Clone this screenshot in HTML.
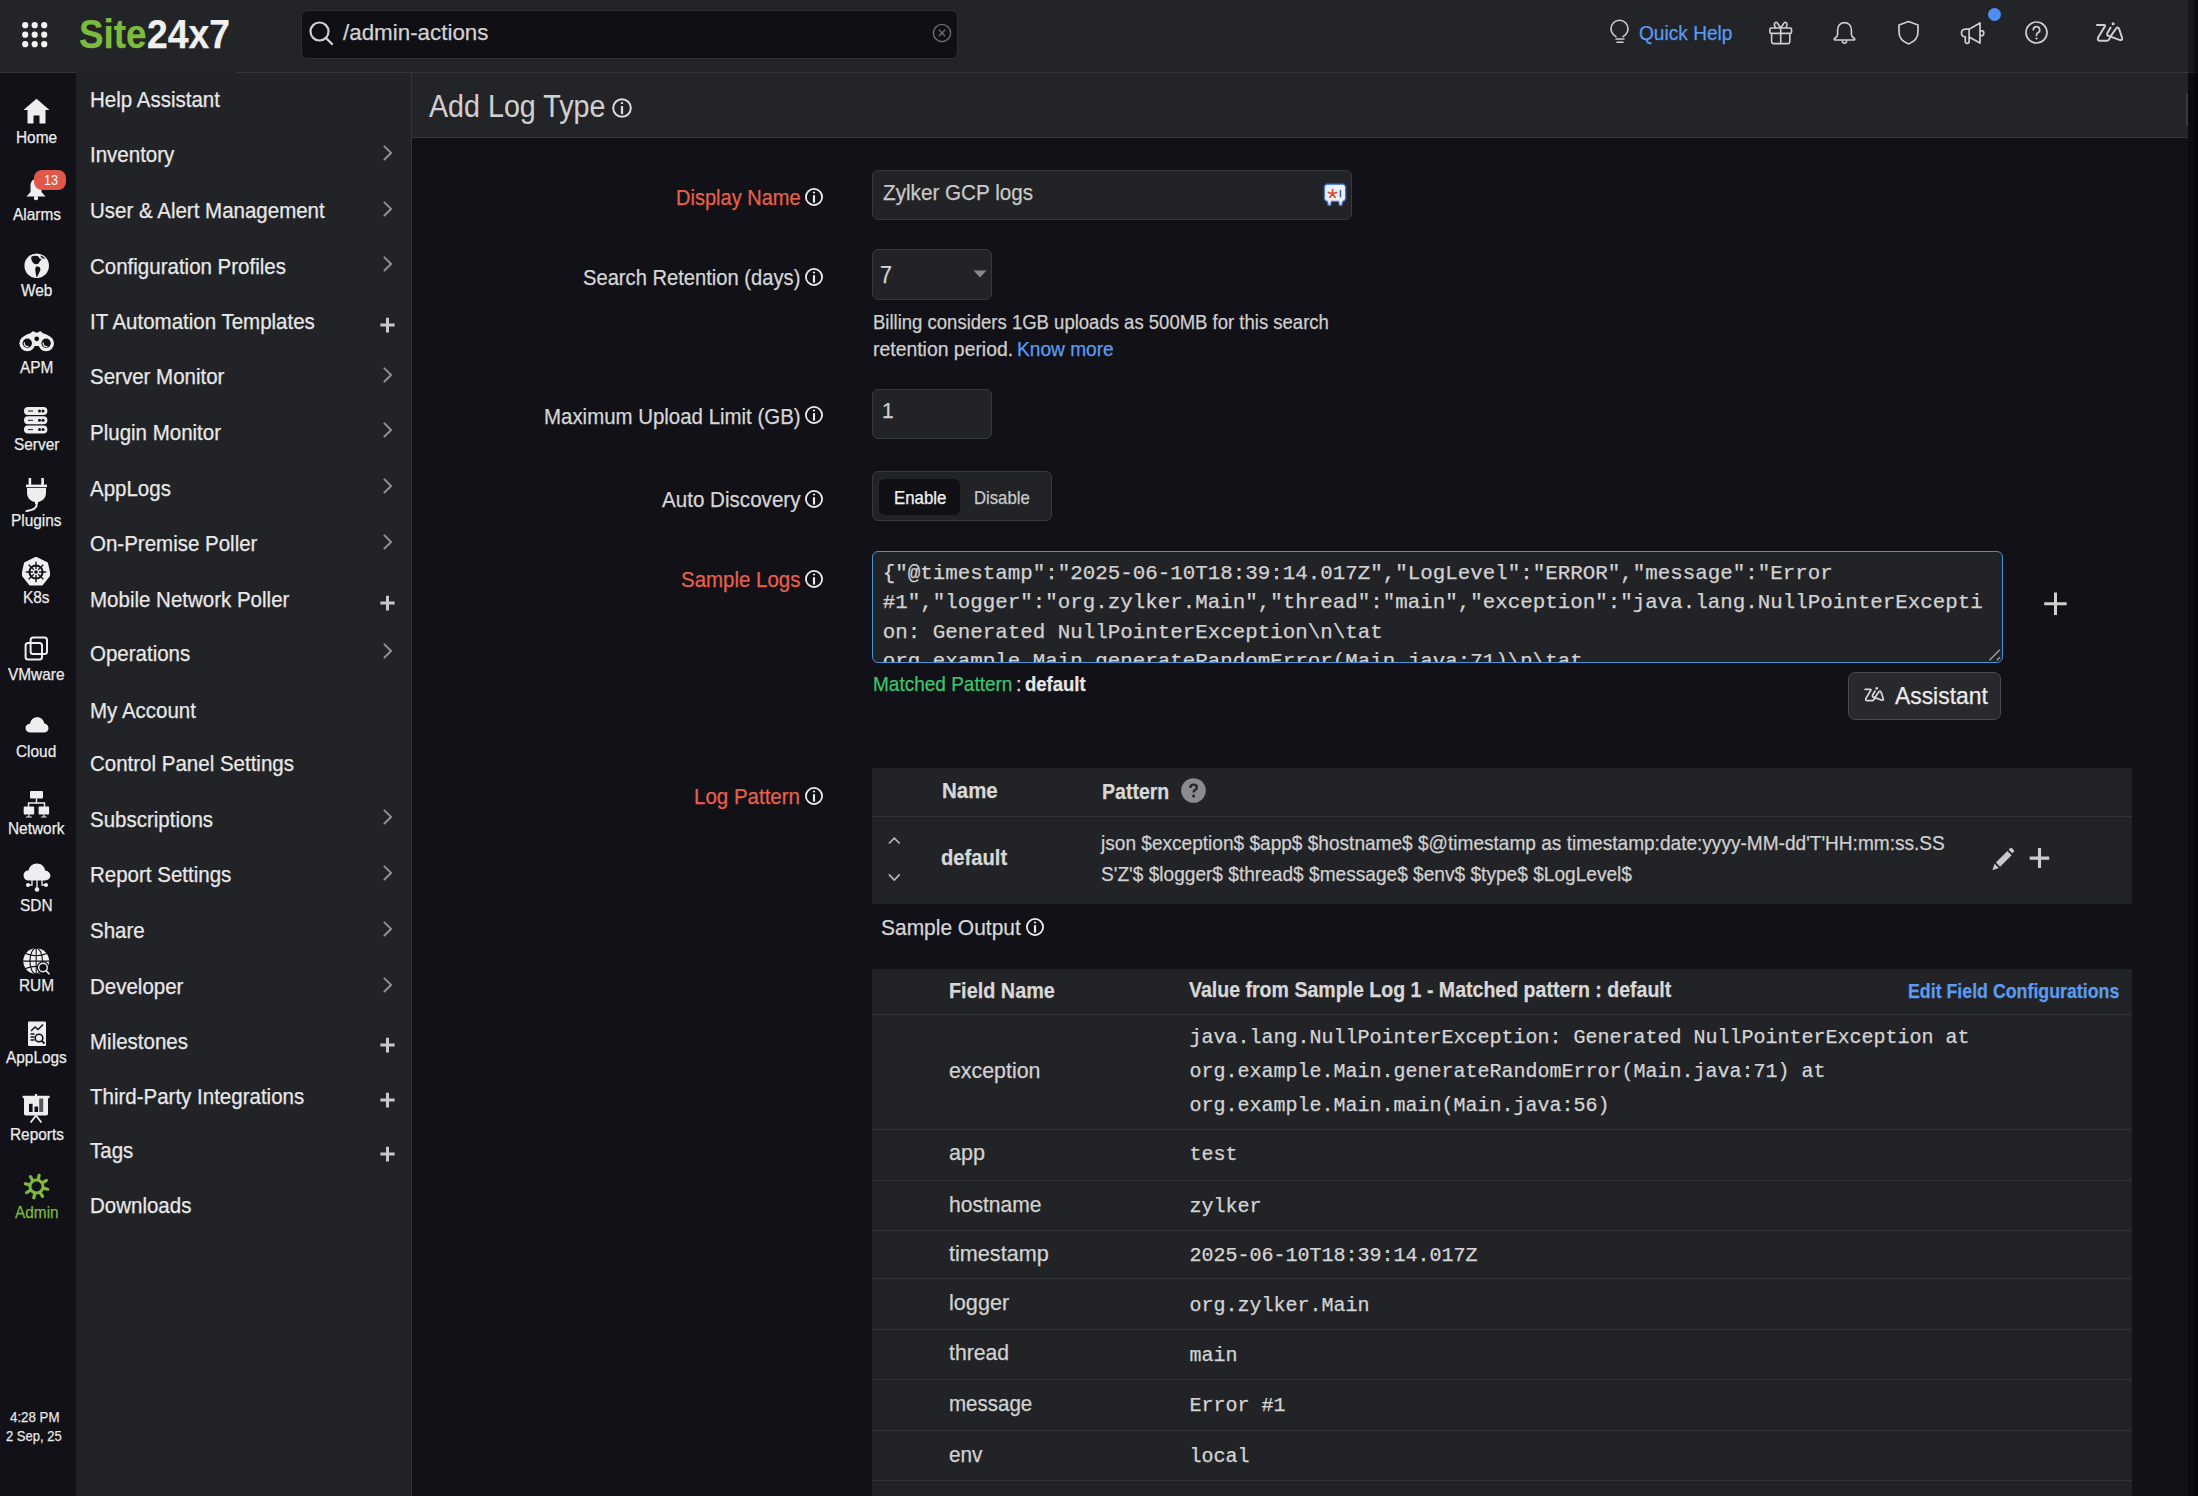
<!DOCTYPE html><html><head><meta charset="utf-8"><title>Add Log Type</title><style>*{margin:0;padding:0}
html,body{width:2198px;height:1496px;overflow:hidden;background:#111117;font-family:"Liberation Sans", sans-serif;}
.a{position:absolute;display:block}
.t{position:absolute;line-height:0;white-space:pre;transform-origin:0 0;-webkit-text-stroke:0.25px currentColor;}
</style></head><body><div class="a" style="left:0px;top:0px;width:2198px;height:72px;background:#222428;"></div>
<div class="a" style="left:0px;top:72px;width:2198px;height:1px;background:#34353a;"></div>
<div class="a" style="left:0px;top:73px;width:76px;height:1423px;background:#111117;"></div>
<div class="a" style="left:76px;top:73px;width:335px;height:1423px;background:#222327;"></div>
<div class="a" style="left:76px;top:72px;width:160px;height:1px;background:#222327;"></div>
<div class="a" style="left:411px;top:73px;width:1px;height:1423px;background:#34353a;"></div>
<div class="a" style="left:412px;top:73px;width:1786px;height:1423px;background:#111117;"></div>
<div class="a" style="left:412px;top:73px;width:1776px;height:64px;background:#222428;"></div>
<div class="a" style="left:412px;top:137px;width:1776px;height:1px;background:#34353a;"></div>
<svg class="a" style="left:21.6px;top:21.6px;" width="26" height="26" viewBox="0 0 26 26"><circle cx="3.2" cy="3.2" r="3.1" fill="#f2f2f2"/><circle cx="3.2" cy="12.7" r="3.1" fill="#f2f2f2"/><circle cx="3.2" cy="22.2" r="3.1" fill="#f2f2f2"/><circle cx="12.7" cy="3.2" r="3.1" fill="#f2f2f2"/><circle cx="12.7" cy="12.7" r="3.1" fill="#f2f2f2"/><circle cx="12.7" cy="22.2" r="3.1" fill="#f2f2f2"/><circle cx="22.2" cy="3.2" r="3.1" fill="#f2f2f2"/><circle cx="22.2" cy="12.7" r="3.1" fill="#f2f2f2"/><circle cx="22.2" cy="22.2" r="3.1" fill="#f2f2f2"/></svg>
<div class="t" style="left:79.00px;top:34.22px;font-size:41.2px;color:#7dbb3c;font-weight:bold;transform:scaleX(0.8933);">Site</div>
<div class="t" style="left:147.00px;top:34.22px;font-size:41.2px;color:#f0f0f0;font-weight:bold;transform:scaleX(0.9056);">24x7</div>
<div class="a" style="left:301px;top:9.5px;width:656.5px;height:49.5px;background:#0f0f14;border:1px solid #2d2f33;box-sizing:border-box;border-radius:7px;"></div>
<svg class="a" style="left:308px;top:20px;" width="28" height="28" viewBox="0 0 28 28"><circle cx="11.5" cy="11.5" r="9" fill="none" stroke="#d0d0d0" stroke-width="2.2"/><line x1="18" y1="18" x2="24" y2="24" stroke="#d0d0d0" stroke-width="2.4" stroke-linecap="round"/></svg>
<div class="t" style="left:343.00px;top:33.37px;font-size:22.0px;color:#d2d2d2;transform:scaleX(1.0170);">/admin-actions</div>
<svg class="a" style="left:932px;top:23px;" width="20" height="20" viewBox="0 0 20 20"><circle cx="10" cy="10" r="8.6" fill="none" stroke="#6c6d72" stroke-width="1.4"/><path d="M6.8 6.8 L13.2 13.2 M13.2 6.8 L6.8 13.2" stroke="#6c6d72" stroke-width="1.4"/></svg>
<svg class="a" style="left:1607px;top:19px;" width="26" height="27" viewBox="0 0 26 27"><path d="M9 17.6 Q4 14.6 4 9.8 A8.5 8.5 0 0 1 21 9.8 Q21 14.6 16 17.6" fill="none" stroke="#cfcfcf" stroke-width="1.6" stroke-linecap="round"/><path d="M9 20 H17 M10 23.2 H16" stroke="#cfcfcf" stroke-width="1.6" stroke-linecap="round"/></svg>
<div class="t" style="left:1639.00px;top:32.76px;font-size:20.87px;color:#5a9bf0;transform:scaleX(0.9161);">Quick Help</div>
<svg class="a" style="left:1767px;top:19px;" width="27" height="27" viewBox="0 0 27 27"><rect x="2.9" y="9" width="21.6" height="5.4" rx="1.2" fill="none" stroke="#cfcfcf" stroke-width="1.6"/><path d="M4.6 14.4 V22.6 Q4.6 24.6 6.6 24.6 H20.8 Q22.8 24.6 22.8 22.6 V14.4 M13.7 9 V24.6" fill="none" stroke="#cfcfcf" stroke-width="1.6"/><path d="M13.7 9 L10.5 4.3 Q9.3 2.6 8 3.8 Q7 5 7.6 6.5 L8.6 9 M13.7 9 L16.9 4.3 Q18.1 2.6 19.4 3.8 Q20.4 5 19.8 6.5 L18.8 9" fill="none" stroke="#cfcfcf" stroke-width="1.6" stroke-linejoin="round"/></svg>
<svg class="a" style="left:1831px;top:19px;" width="27" height="27" viewBox="0 0 27 27"><path d="M13.5 3.6 C8.6 3.6 6.6 7.6 6.6 11.6 V15.6 Q6.6 17.4 4.2 19 Q2.6 20.2 3.6 21 H23.4 Q24.4 20.2 22.8 19 Q20.4 17.4 20.4 15.6 V11.6 C20.4 7.6 18.4 3.6 13.5 3.6 Z" fill="none" stroke="#cfcfcf" stroke-width="1.6" stroke-linejoin="round"/><path d="M11.2 21.2 Q11.4 24.2 13.5 24.2 Q15.6 24.2 15.8 21.2" fill="none" stroke="#cfcfcf" stroke-width="1.6"/></svg>
<svg class="a" style="left:1895px;top:19px;" width="27" height="27" viewBox="0 0 27 27"><path d="M13.5 2.5 L23 6 V13 C23 19 18.5 23 13.5 25 C8.5 23 4 19 4 13 V6 Z" fill="none" stroke="#cfcfcf" stroke-width="1.7" stroke-linejoin="round"/></svg>
<svg class="a" style="left:1959px;top:19px;" width="27" height="27" viewBox="0 0 27 27"><path d="M10.1 10.2 L21 3.9 V24.1 L10.1 18.1 Z M10.1 10.2 H7 Q2.5 10.2 2.5 14 Q2.5 17.8 6.3 17.8 V22.6 Q6.3 24.3 8.2 24.3 Q10.1 24.3 10.1 22.6 V18.1 M21 11.9 H23.4 Q24.7 11.9 24.7 13.2 V15.3 Q24.7 16.6 23.4 16.6 H21" fill="none" stroke="#cfcfcf" stroke-width="1.7" stroke-linejoin="round"/></svg>
<div class="a" style="left:1988px;top:8px;width:12.5px;height:12.5px;background:#4f8ff0;border-radius:7px;"></div>
<svg class="a" style="left:2023px;top:19px;" width="27" height="27" viewBox="0 0 27 27"><circle cx="13.5" cy="13.5" r="10.5" fill="none" stroke="#cfcfcf" stroke-width="1.7"/><path d="M10.3 10.8a3.2 3.2 0 1 1 4.6 2.9c-.9.5-1.4 1.2-1.4 2.2v.6" fill="none" stroke="#cfcfcf" stroke-width="1.7" stroke-linecap="round"/><circle cx="13.5" cy="19.6" r="1.1" fill="#cfcfcf"/></svg>
<svg class="a" style="left:2094px;top:19px;" width="32" height="26" viewBox="0 0 32 26"><path d="M3 6 H10 Q11.6 6 10.8 7.4 L4.1 18.6 Q3 21.7 6 21.7 H13 Q14.6 21.7 15.6 19.6 L16.6 17.4 M16.6 8.5 L13.3 14.3 Q12.6 16.4 14.6 16.9 L25.4 20.9 Q28.8 21.8 28.1 18.7 L25.2 10.2 Q23.8 7 21.6 10.2 L16.5 17.4" fill="none" stroke="#cfcfcf" stroke-width="2" stroke-linejoin="round" stroke-linecap="round"/><circle cx="19.1" cy="4.7" r="1.5" fill="#cfcfcf"/></svg>
<div class="t" style="left:15.96px;top:137.83px;font-size:16.94px;color:#ececec;transform:scaleX(0.9091);">Home</div>
<div class="t" style="left:12.54px;top:215.33px;font-size:16.94px;color:#ececec;transform:scaleX(0.9091);">Alarms</div>
<div class="t" style="left:20.81px;top:291.33px;font-size:16.94px;color:#ececec;transform:scaleX(0.9091);">Web</div>
<div class="t" style="left:19.81px;top:368.43px;font-size:16.94px;color:#ececec;transform:scaleX(0.9091);">APM</div>
<div class="t" style="left:13.82px;top:444.73px;font-size:16.94px;color:#ececec;transform:scaleX(0.9091);">Server</div>
<div class="t" style="left:11.25px;top:521.33px;font-size:16.94px;color:#ececec;transform:scaleX(0.9091);">Plugins</div>
<div class="t" style="left:23.23px;top:597.53px;font-size:16.94px;color:#ececec;transform:scaleX(0.9091);">K8s</div>
<div class="t" style="left:8.26px;top:675.03px;font-size:16.94px;color:#ececec;transform:scaleX(0.9091);">VMware</div>
<div class="t" style="left:16.38px;top:752.03px;font-size:16.94px;color:#ececec;transform:scaleX(0.9091);">Cloud</div>
<div class="t" style="left:8.26px;top:828.83px;font-size:16.94px;color:#ececec;transform:scaleX(0.9091);">Network</div>
<div class="t" style="left:20.24px;top:905.53px;font-size:16.94px;color:#ececec;transform:scaleX(0.9091);">SDN</div>
<div class="t" style="left:18.96px;top:986.43px;font-size:16.94px;color:#ececec;transform:scaleX(0.9091);">RUM</div>
<div class="t" style="left:6.10px;top:1058.03px;font-size:16.94px;color:#ececec;transform:scaleX(0.9091);">AppLogs</div>
<div class="t" style="left:9.54px;top:1135.23px;font-size:16.94px;color:#ececec;transform:scaleX(0.9091);">Reports</div>
<div class="t" style="left:14.67px;top:1212.53px;font-size:16.94px;color:#7cb93c;transform:scaleX(0.9091);">Admin</div>
<svg class="a" style="left:23px;top:98px;" width="27" height="26" viewBox="0 0 27 26"><path d="M13.5 0.8 L26.5 12 H22.5 V25.5 H16.5 V17.5 H10.5 V25.5 H4.5 V12 H0.5 Z" fill="#eeeeee"/></svg>
<svg class="a" style="left:25px;top:176px;" width="22" height="25" viewBox="0 0 22 25"><path d="M11 3 C6.5 3 5.5 7 5.5 11 V16 L1.5 20.5 H20.5 L16.5 16 V11 C16.5 7 15.5 3 11 3Z" fill="#eeeeee"/><circle cx="11" cy="22" r="2.2" fill="#eeeeee"/></svg>
<div class="a" style="left:34.3px;top:170px;width:31.6px;height:20px;background:#e0584a;border-radius:8px;"></div>
<div class="t" style="left:43.50px;top:179.99px;font-size:14.45px;color:#ffffff;transform:scaleX(0.8710);-webkit-text-stroke:0;">13</div>
<svg class="a" style="left:23.5px;top:252.5px;" width="25" height="25" viewBox="0 0 25 25"><circle cx="12.7" cy="12.8" r="12.3" fill="#eeeeee"/><path d="M7.5 3.4 Q10 2.3 13.5 2.9 Q15.5 3.6 15 5 Q17 5.3 17.4 7 Q15.8 7.6 15.4 9.2 Q14.4 11 12.5 11.3 Q10.4 11.5 9.4 10 Q8.2 8.8 7.6 7.2 Q6.8 5 7.5 3.4 Z M16.2 2.6 Q19 3 21 5.4 Q19.5 6 18 5 Q16.6 4 16.2 2.6 Z M12 13.6 Q14.5 13 16 14.6 Q17 16.5 15.5 19 Q14.3 21 13.3 23.8 Q12.5 24.6 12.3 23.5 Q12 21 11.5 19 Q10.5 16.5 12 13.6 Z" fill="#111117"/></svg>
<svg class="a" style="left:18.5px;top:330px;" width="36" height="22" viewBox="0 0 36 22"><circle cx="8.3" cy="13.3" r="7.9" fill="#eeeeee"/><circle cx="27.1" cy="13.3" r="7.9" fill="#eeeeee"/><path d="M2.6 11 Q4.5 4.5 11.5 3.2 L13.4 1.6 Q14.4 0.9 15.4 1.7 L16.6 2.6 H18.8 L20 1.7 Q21 0.9 22 1.6 L23.9 3.2 Q30.9 4.5 32.8 11 L31 16 H4.4 Z" fill="#eeeeee"/><circle cx="8.3" cy="13.3" r="4.7" fill="#111117"/><circle cx="27.1" cy="13.3" r="4.7" fill="#111117"/><circle cx="17.7" cy="8.8" r="2.4" fill="#111117"/><path d="M5.4 12.4 A3.3 3.3 0 0 0 9.6 16.5 M24.2 12.4 A3.3 3.3 0 0 0 28.4 16.5" fill="none" stroke="#eeeeee" stroke-width="1.3"/></svg>
<svg class="a" style="left:24.4px;top:407px;" width="24" height="27" viewBox="0 0 24 27"><rect x="0" y="0.0" width="23.4" height="8" rx="4" fill="#eeeeee"/><path d="M4 4.0h5" stroke="#111117" stroke-width="1"/><circle cx="15.5" cy="4.0" r="1.5" fill="#111117"/><circle cx="19" cy="4.0" r="1.5" fill="#111117"/><rect x="0" y="9.3" width="23.4" height="8" rx="4" fill="#eeeeee"/><path d="M4 13.3h5" stroke="#111117" stroke-width="1"/><circle cx="15.5" cy="13.3" r="1.5" fill="#111117"/><circle cx="19" cy="13.3" r="1.5" fill="#111117"/><rect x="0" y="18.6" width="23.4" height="8" rx="4" fill="#eeeeee"/><path d="M4 22.6h5" stroke="#111117" stroke-width="1"/><circle cx="15.5" cy="22.6" r="1.5" fill="#111117"/><circle cx="19" cy="22.6" r="1.5" fill="#111117"/></svg>
<svg class="a" style="left:25px;top:477px;" width="23" height="36" viewBox="0 0 23 36"><rect x="3.6" y="1" width="2.6" height="8" fill="#eeeeee"/><rect x="16.3" y="1" width="2.6" height="8" fill="#eeeeee"/><rect x="1" y="7.6" width="21" height="2.6" fill="#eeeeee"/><path d="M2 11 H21 V16 C21 21 17 24.5 13 25 V27 H10 V25 C6 24.5 2 21 2 16Z" fill="#eeeeee"/><path d="M11.8 26 C12 31 9 33 1.5 34" stroke="#eeeeee" stroke-width="2" fill="none" stroke-linecap="round"/></svg>
<svg class="a" style="left:22.3px;top:556.5px;" width="28" height="29" viewBox="0 0 28 29"><polygon points="14.00,0.80 24.95,6.07 27.65,17.92 20.07,27.41 7.93,27.41 0.35,17.92 3.05,6.07" fill="#eeeeee" stroke="#eeeeee" stroke-width="2" stroke-linejoin="round"/><circle cx="14" cy="15" r="6.6" fill="none" stroke="#111117" stroke-width="2"/><line x1="14.00" y1="18.00" x2="14.00" y2="25.30" stroke="#111117" stroke-width="1.4"/><line x1="16.12" y1="17.12" x2="21.28" y2="22.28" stroke="#111117" stroke-width="1.4"/><line x1="17.00" y1="15.00" x2="24.30" y2="15.00" stroke="#111117" stroke-width="1.4"/><line x1="16.12" y1="12.88" x2="21.28" y2="7.72" stroke="#111117" stroke-width="1.4"/><line x1="14.00" y1="12.00" x2="14.00" y2="4.70" stroke="#111117" stroke-width="1.4"/><line x1="11.88" y1="12.88" x2="6.72" y2="7.72" stroke="#111117" stroke-width="1.4"/><line x1="11.00" y1="15.00" x2="3.70" y2="15.00" stroke="#111117" stroke-width="1.4"/><line x1="11.88" y1="17.12" x2="6.72" y2="22.28" stroke="#111117" stroke-width="1.4"/><circle cx="14" cy="15" r="1.8" fill="#111117"/></svg>
<svg class="a" style="left:24px;top:636px;" width="25" height="25" viewBox="0 0 25 25"><rect x="6.6" y="1.6" width="16.4" height="16.4" rx="2.5" fill="none" stroke="#eeeeee" stroke-width="2"/><rect x="1.6" y="7" width="16.4" height="16.4" rx="2.5" fill="none" stroke="#eeeeee" stroke-width="2"/></svg>
<svg class="a" style="left:24.5px;top:716px;" width="24" height="17" viewBox="0 0 24 17"><path d="M5.5 16.5 C2.5 16.5 0.5 14.5 0.5 12 C0.5 9.5 2.5 7.8 5 7.8 C5.5 4 8.5 1.3 12.3 1.3 C16 1.3 18.8 4 19.3 7.5 C21.8 7.8 23.5 9.8 23.5 12.2 C23.5 14.6 21.6 16.5 19 16.5Z" fill="#eeeeee"/></svg>
<svg class="a" style="left:23px;top:790px;" width="27" height="28" viewBox="0 0 27 28"><rect x="7" y="1" width="13" height="7.6" rx="1" fill="#eeeeee"/><path d="M13.5 8.6 V13 M5.5 17 V13 H21.5 V17" stroke="#eeeeee" stroke-width="1.4" fill="none"/><rect x="0.7" y="16.5" width="10.5" height="8" rx="1" fill="#eeeeee"/><rect x="15.6" y="16.5" width="10.5" height="8" rx="1" fill="#eeeeee"/><path d="M5.9 24.5 V27 M3 27 H8.8 M20.8 24.5 V27 M18 27 H23.6" stroke="#eeeeee" stroke-width="1.2"/></svg>
<svg class="a" style="left:22.5px;top:863px;" width="28" height="29" viewBox="0 0 28 29"><path d="M6 17.5 C2.8 17.5 0.6 15.3 0.6 12.4 C0.6 9.6 2.8 7.6 5.6 7.6 C6.2 3.6 9.6 0.6 13.9 0.6 C18.2 0.6 21.5 3.5 22.1 7.4 C25 7.7 27.4 9.8 27.4 12.6 C27.4 15.3 25.1 17.5 22 17.5Z" fill="#eeeeee"/><path d="M14 17 V25 M9 17 V22 H5.5 M19 17 V22 H22.5" stroke="#eeeeee" stroke-width="1.3" fill="none"/><circle cx="14" cy="26.5" r="2.3" fill="#eeeeee"/><circle cx="5" cy="22" r="2.1" fill="#eeeeee"/><circle cx="23" cy="22" r="2.1" fill="#eeeeee"/></svg>
<svg class="a" style="left:22px;top:946.5px;" width="30" height="30" viewBox="0 0 30 30"><circle cx="14.2" cy="14.1" r="12.9" fill="#eeeeee"/><g fill="none" stroke="#111117" stroke-width="1.1"><path d="M1.2 14.1 H27.2 M14.2 1.2 V27"/><ellipse cx="14.2" cy="14.1" rx="6.3" ry="12.9"/><path d="M3.6 6.6 Q14.2 11 24.8 6.6 M3.6 21.6 Q14.2 17.2 24.8 21.6"/></g><circle cx="21" cy="20.5" r="6.2" fill="#111117"/><circle cx="21" cy="20.5" r="4.3" fill="none" stroke="#eeeeee" stroke-width="1.4"/><path d="M24 23.6 L27 26.8" stroke="#eeeeee" stroke-width="1.6" stroke-linecap="round"/></svg>
<svg class="a" style="left:26.5px;top:1021px;" width="20" height="26" viewBox="0 0 20 26"><path d="M1 1.5 Q1 0.5 2 0.5 H18 Q19 0.5 19 1.5 V24 Q19 25 18 25 H2 Q1 25 1 24Z" fill="#eeeeee"/><path d="M4 10 L8 6 L11 8.5 L16 3.5" stroke="#111117" stroke-width="1.4" fill="none"/><path d="M3.5 13h4M3.5 16h4M3.5 19h4" stroke="#111117" stroke-width="1.3"/><circle cx="12" cy="17" r="3.8" fill="none" stroke="#111117" stroke-width="1.6"/><path d="M14.8 19.8 L17.5 22.5" stroke="#111117" stroke-width="1.8"/></svg>
<svg class="a" style="left:22px;top:1094px;" width="28" height="30" viewBox="0 0 28 30"><rect x="0.6" y="1.8" width="27" height="2.4" rx="0.8" fill="#eeeeee"/><rect x="2" y="2.5" width="24" height="19" rx="1.8" fill="#eeeeee"/><rect x="12.9" y="0" width="2.2" height="3" fill="#eeeeee"/><rect x="7" y="9.8" width="3.6" height="8.2" fill="#111117"/><rect x="12.5" y="12.5" width="3.6" height="5.5" fill="#111117"/><rect x="17.2" y="4.5" width="4" height="13.5" fill="#55565a"/><path d="M14 21.5 L8.6 28.5 M14 21.5 L19.4 28.5" stroke="#eeeeee" stroke-width="1.8"/></svg>
<svg class="a" style="left:22.8px;top:1172.5px;" width="27" height="27" viewBox="0 0 27 27"><line x1="15.37" y1="5.72" x2="16.21" y2="2.22" stroke="#7cb93c" stroke-width="3.2" stroke-linecap="round"/><line x1="20.32" y1="9.32" x2="23.39" y2="7.44" stroke="#7cb93c" stroke-width="3.2" stroke-linecap="round"/><line x1="21.28" y1="15.37" x2="24.78" y2="16.21" stroke="#7cb93c" stroke-width="3.2" stroke-linecap="round"/><line x1="17.68" y1="20.32" x2="19.56" y2="23.39" stroke="#7cb93c" stroke-width="3.2" stroke-linecap="round"/><line x1="11.63" y1="21.28" x2="10.79" y2="24.78" stroke="#7cb93c" stroke-width="3.2" stroke-linecap="round"/><line x1="6.68" y1="17.68" x2="3.61" y2="19.56" stroke="#7cb93c" stroke-width="3.2" stroke-linecap="round"/><line x1="5.72" y1="11.63" x2="2.22" y2="10.79" stroke="#7cb93c" stroke-width="3.2" stroke-linecap="round"/><line x1="9.32" y1="6.68" x2="7.44" y2="3.61" stroke="#7cb93c" stroke-width="3.2" stroke-linecap="round"/><circle cx="13.5" cy="13.5" r="6.5" fill="none" stroke="#7cb93c" stroke-width="3.0"/></svg>
<div class="t" style="left:9.60px;top:1416.62px;font-size:15.52px;color:#e6e6e6;transform:scaleX(0.8582);">4:28 PM</div>
<div class="t" style="left:6.30px;top:1436.32px;font-size:15.52px;color:#e6e6e6;transform:scaleX(0.8398);">2 Sep, 25</div>
<div class="t" style="left:89.50px;top:99.89px;font-size:21.94px;color:#e8e8e8;transform:scaleX(0.9344);">Help Assistant</div>
<div class="t" style="left:89.50px;top:154.89px;font-size:21.94px;color:#e8e8e8;transform:scaleX(0.9344);">Inventory</div>
<svg class="a" style="left:380px;top:142.5px;" width="16" height="20" viewBox="0 0 16 20"><path d="M4.4 3.4 L11.1 10 L4.4 16.5" fill="none" stroke="#8e8f93" stroke-width="2" stroke-linecap="round" stroke-linejoin="round"/></svg>
<div class="t" style="left:89.50px;top:210.99px;font-size:21.94px;color:#e8e8e8;transform:scaleX(0.9344);">User &amp; Alert Management</div>
<svg class="a" style="left:380px;top:198.6px;" width="16" height="20" viewBox="0 0 16 20"><path d="M4.4 3.4 L11.1 10 L4.4 16.5" fill="none" stroke="#8e8f93" stroke-width="2" stroke-linecap="round" stroke-linejoin="round"/></svg>
<div class="t" style="left:89.50px;top:266.69px;font-size:21.94px;color:#e8e8e8;transform:scaleX(0.9344);">Configuration Profiles</div>
<svg class="a" style="left:380px;top:254.3px;" width="16" height="20" viewBox="0 0 16 20"><path d="M4.4 3.4 L11.1 10 L4.4 16.5" fill="none" stroke="#8e8f93" stroke-width="2" stroke-linecap="round" stroke-linejoin="round"/></svg>
<div class="t" style="left:89.50px;top:321.99px;font-size:21.94px;color:#e8e8e8;transform:scaleX(0.9344);">IT Automation Templates</div>
<svg class="a" style="left:378px;top:315.20000000000005px;" width="20" height="20" viewBox="0 0 20 20"><path d="M2.4 10 H16.6 M9.5 2.8 V17.5" fill="none" stroke="#c9c9c9" stroke-width="3"/></svg>
<div class="t" style="left:89.50px;top:376.99px;font-size:21.94px;color:#e8e8e8;transform:scaleX(0.9344);">Server Monitor</div>
<svg class="a" style="left:380px;top:364.6px;" width="16" height="20" viewBox="0 0 16 20"><path d="M4.4 3.4 L11.1 10 L4.4 16.5" fill="none" stroke="#8e8f93" stroke-width="2" stroke-linecap="round" stroke-linejoin="round"/></svg>
<div class="t" style="left:89.50px;top:432.69px;font-size:21.94px;color:#e8e8e8;transform:scaleX(0.9344);">Plugin Monitor</div>
<svg class="a" style="left:380px;top:420.3px;" width="16" height="20" viewBox="0 0 16 20"><path d="M4.4 3.4 L11.1 10 L4.4 16.5" fill="none" stroke="#8e8f93" stroke-width="2" stroke-linecap="round" stroke-linejoin="round"/></svg>
<div class="t" style="left:89.50px;top:488.69px;font-size:21.94px;color:#e8e8e8;transform:scaleX(0.9344);">AppLogs</div>
<svg class="a" style="left:380px;top:476.3px;" width="16" height="20" viewBox="0 0 16 20"><path d="M4.4 3.4 L11.1 10 L4.4 16.5" fill="none" stroke="#8e8f93" stroke-width="2" stroke-linecap="round" stroke-linejoin="round"/></svg>
<div class="t" style="left:89.50px;top:544.39px;font-size:21.94px;color:#e8e8e8;transform:scaleX(0.9344);">On-Premise Poller</div>
<svg class="a" style="left:380px;top:532px;" width="16" height="20" viewBox="0 0 16 20"><path d="M4.4 3.4 L11.1 10 L4.4 16.5" fill="none" stroke="#8e8f93" stroke-width="2" stroke-linecap="round" stroke-linejoin="round"/></svg>
<div class="t" style="left:89.50px;top:600.09px;font-size:21.94px;color:#e8e8e8;transform:scaleX(0.9344);">Mobile Network Poller</div>
<svg class="a" style="left:378px;top:593.3000000000001px;" width="20" height="20" viewBox="0 0 20 20"><path d="M2.4 10 H16.6 M9.5 2.8 V17.5" fill="none" stroke="#c9c9c9" stroke-width="3"/></svg>
<div class="t" style="left:89.50px;top:653.79px;font-size:21.94px;color:#e8e8e8;transform:scaleX(0.9344);">Operations</div>
<svg class="a" style="left:380px;top:641.4px;" width="16" height="20" viewBox="0 0 16 20"><path d="M4.4 3.4 L11.1 10 L4.4 16.5" fill="none" stroke="#8e8f93" stroke-width="2" stroke-linecap="round" stroke-linejoin="round"/></svg>
<div class="t" style="left:89.50px;top:710.59px;font-size:21.94px;color:#e8e8e8;transform:scaleX(0.9344);">My Account</div>
<div class="t" style="left:89.50px;top:764.39px;font-size:21.94px;color:#e8e8e8;transform:scaleX(0.9344);">Control Panel Settings</div>
<div class="t" style="left:89.50px;top:819.59px;font-size:21.94px;color:#e8e8e8;transform:scaleX(0.9344);">Subscriptions</div>
<svg class="a" style="left:380px;top:807.2px;" width="16" height="20" viewBox="0 0 16 20"><path d="M4.4 3.4 L11.1 10 L4.4 16.5" fill="none" stroke="#8e8f93" stroke-width="2" stroke-linecap="round" stroke-linejoin="round"/></svg>
<div class="t" style="left:89.50px;top:875.39px;font-size:21.94px;color:#e8e8e8;transform:scaleX(0.9344);">Report Settings</div>
<svg class="a" style="left:380px;top:863px;" width="16" height="20" viewBox="0 0 16 20"><path d="M4.4 3.4 L11.1 10 L4.4 16.5" fill="none" stroke="#8e8f93" stroke-width="2" stroke-linecap="round" stroke-linejoin="round"/></svg>
<div class="t" style="left:89.50px;top:931.39px;font-size:21.94px;color:#e8e8e8;transform:scaleX(0.9344);">Share</div>
<svg class="a" style="left:380px;top:919px;" width="16" height="20" viewBox="0 0 16 20"><path d="M4.4 3.4 L11.1 10 L4.4 16.5" fill="none" stroke="#8e8f93" stroke-width="2" stroke-linecap="round" stroke-linejoin="round"/></svg>
<div class="t" style="left:89.50px;top:987.39px;font-size:21.94px;color:#e8e8e8;transform:scaleX(0.9344);">Developer</div>
<svg class="a" style="left:380px;top:975px;" width="16" height="20" viewBox="0 0 16 20"><path d="M4.4 3.4 L11.1 10 L4.4 16.5" fill="none" stroke="#8e8f93" stroke-width="2" stroke-linecap="round" stroke-linejoin="round"/></svg>
<div class="t" style="left:89.50px;top:1041.99px;font-size:21.94px;color:#e8e8e8;transform:scaleX(0.9344);">Milestones</div>
<svg class="a" style="left:378px;top:1035.1999999999998px;" width="20" height="20" viewBox="0 0 20 20"><path d="M2.4 10 H16.6 M9.5 2.8 V17.5" fill="none" stroke="#c9c9c9" stroke-width="3"/></svg>
<div class="t" style="left:89.50px;top:1097.09px;font-size:21.94px;color:#e8e8e8;transform:scaleX(0.9344);">Third-Party Integrations</div>
<svg class="a" style="left:378px;top:1090.3px;" width="20" height="20" viewBox="0 0 20 20"><path d="M2.4 10 H16.6 M9.5 2.8 V17.5" fill="none" stroke="#c9c9c9" stroke-width="3"/></svg>
<div class="t" style="left:89.50px;top:1150.99px;font-size:21.94px;color:#e8e8e8;transform:scaleX(0.9344);">Tags</div>
<svg class="a" style="left:378px;top:1144.1999999999998px;" width="20" height="20" viewBox="0 0 20 20"><path d="M2.4 10 H16.6 M9.5 2.8 V17.5" fill="none" stroke="#c9c9c9" stroke-width="3"/></svg>
<div class="t" style="left:89.50px;top:1206.09px;font-size:21.94px;color:#e8e8e8;transform:scaleX(0.9344);">Downloads</div>
<div class="t" style="left:428.90px;top:107.49px;font-size:30.9px;color:#d0d0d0;transform:scaleX(0.9277);-webkit-text-stroke:0.1px currentColor;">Add Log Type</div>
<svg class="a" style="left:611.8px;top:97.9px;" width="20" height="20" viewBox="0 0 20 20"><g transform="translate(10 10) scale(1.088)"><circle cx="0" cy="0" r="8.1" fill="none" stroke="#dddddd" stroke-width="1.8"/><rect x="-1.05" y="-5.3" width="2.1" height="1.6" fill="#dddddd"/><rect x="-1.05" y="-1.8" width="2.1" height="7.4" fill="#dddddd"/></g></svg>
<div class="t" style="left:675.50px;top:198.37px;font-size:21.72px;color:#e8604c;transform:scaleX(0.9217);">Display Name</div>
<svg class="a" style="left:804.1px;top:187px;" width="20" height="20" viewBox="0 0 20 20"><g transform="translate(10 10) scale(1.000)"><circle cx="0" cy="0" r="8.1" fill="none" stroke="#eeeeee" stroke-width="1.8"/><rect x="-1.05" y="-5.3" width="2.1" height="1.6" fill="#eeeeee"/><rect x="-1.05" y="-1.8" width="2.1" height="7.4" fill="#eeeeee"/></g></svg>
<div class="t" style="left:582.70px;top:278.47px;font-size:21.72px;color:#d6d6d6;transform:scaleX(0.9282);">Search Retention (days)</div>
<svg class="a" style="left:804.1px;top:267.2px;" width="20" height="20" viewBox="0 0 20 20"><g transform="translate(10 10) scale(1.000)"><circle cx="0" cy="0" r="8.1" fill="none" stroke="#eeeeee" stroke-width="1.8"/><rect x="-1.05" y="-5.3" width="2.1" height="1.6" fill="#eeeeee"/><rect x="-1.05" y="-1.8" width="2.1" height="7.4" fill="#eeeeee"/></g></svg>
<div class="t" style="left:543.50px;top:416.67px;font-size:21.72px;color:#d6d6d6;transform:scaleX(0.9407);">Maximum Upload Limit (GB)</div>
<svg class="a" style="left:804.1px;top:405.4px;" width="20" height="20" viewBox="0 0 20 20"><g transform="translate(10 10) scale(1.000)"><circle cx="0" cy="0" r="8.1" fill="none" stroke="#eeeeee" stroke-width="1.8"/><rect x="-1.05" y="-5.3" width="2.1" height="1.6" fill="#eeeeee"/><rect x="-1.05" y="-1.8" width="2.1" height="7.4" fill="#eeeeee"/></g></svg>
<div class="t" style="left:661.60px;top:500.47px;font-size:21.72px;color:#d6d6d6;transform:scaleX(0.9482);">Auto Discovery</div>
<svg class="a" style="left:804.1px;top:489.2px;" width="20" height="20" viewBox="0 0 20 20"><g transform="translate(10 10) scale(1.000)"><circle cx="0" cy="0" r="8.1" fill="none" stroke="#eeeeee" stroke-width="1.8"/><rect x="-1.05" y="-5.3" width="2.1" height="1.6" fill="#eeeeee"/><rect x="-1.05" y="-1.8" width="2.1" height="7.4" fill="#eeeeee"/></g></svg>
<div class="t" style="left:680.70px;top:580.27px;font-size:21.72px;color:#e8604c;transform:scaleX(0.9418);">Sample Logs</div>
<svg class="a" style="left:804.1px;top:569px;" width="20" height="20" viewBox="0 0 20 20"><g transform="translate(10 10) scale(1.000)"><circle cx="0" cy="0" r="8.1" fill="none" stroke="#eeeeee" stroke-width="1.8"/><rect x="-1.05" y="-5.3" width="2.1" height="1.6" fill="#eeeeee"/><rect x="-1.05" y="-1.8" width="2.1" height="7.4" fill="#eeeeee"/></g></svg>
<div class="t" style="left:694.10px;top:797.27px;font-size:21.72px;color:#e8604c;transform:scaleX(0.9439);">Log Pattern</div>
<svg class="a" style="left:804.1px;top:786px;" width="20" height="20" viewBox="0 0 20 20"><g transform="translate(10 10) scale(1.000)"><circle cx="0" cy="0" r="8.1" fill="none" stroke="#eeeeee" stroke-width="1.8"/><rect x="-1.05" y="-5.3" width="2.1" height="1.6" fill="#eeeeee"/><rect x="-1.05" y="-1.8" width="2.1" height="7.4" fill="#eeeeee"/></g></svg>
<div class="a" style="left:872px;top:169.5px;width:479.8px;height:50px;background:#222327;border:1px solid #38393d;box-sizing:border-box;border-radius:6px;"></div>
<div class="t" style="left:882.90px;top:193.22px;font-size:22.15px;color:#c9c9c9;transform:scaleX(0.9339);">Zylker GCP logs</div>
<svg class="a" style="left:1323px;top:182.8px;" width="24" height="24" viewBox="0 0 24 24"><path d="M3.4 1.2 H20.6 L22.6 3.2 V16.3 L20.6 18.3 H19.6 L18.8 22.3 H16.4 L15.6 18.3 H8.4 L7.6 22.3 H5.2 L4.4 18.3 H3.4 L1.4 16.3 V3.2 Z" fill="#f0f0f0" stroke="#3a7ae0" stroke-width="1.3" stroke-linejoin="round"/><path d="M9.5 10.8 L9.50 6.50 M9.5 10.8 L13.59 9.47 M9.5 10.8 L12.03 14.28 M9.5 10.8 L6.97 14.28 M9.5 10.8 L5.41 9.47 " stroke="#e0483a" stroke-width="1.7" stroke-linecap="round"/><rect x="16.7" y="6.8" width="1.5" height="7.6" rx="0.7" fill="#2c5fc0"/></svg>
<div class="a" style="left:872px;top:249.4px;width:119.6px;height:50.8px;background:#222327;border:1px solid #38393d;box-sizing:border-box;border-radius:6px;"></div>
<div class="t" style="left:879.50px;top:275.02px;font-size:23.01px;color:#d6d6d6;transform:scaleX(0.9344);">7</div>
<svg class="a" style="left:972px;top:269px;" width="16" height="10" viewBox="0 0 16 10"><path d="M1.5 1.5 H14.5 L8 8.5 Z" fill="#8a8a8e"/></svg>
<div class="t" style="left:872.50px;top:321.92px;font-size:20.12px;color:#cfcfcf;transform:scaleX(0.9206);">Billing considers 1GB uploads as 500MB for this search</div>
<div class="t" style="left:872.50px;top:348.92px;font-size:20.12px;color:#cfcfcf;transform:scaleX(0.9642);">retention period.</div>
<div class="t" style="left:1017.40px;top:348.92px;font-size:20.12px;color:#5c9cf0;transform:scaleX(0.9513);">Know more</div>
<div class="a" style="left:872px;top:388.5px;width:119.6px;height:50px;background:#222327;border:1px solid #38393d;box-sizing:border-box;border-radius:6px;"></div>
<div class="t" style="left:881.50px;top:411.41px;font-size:22.47px;color:#d0d0d0;transform:scaleX(0.9346);">1</div>
<div class="a" style="left:872px;top:471px;width:179.7px;height:50.4px;background:#222327;border:1px solid #38393d;box-sizing:border-box;border-radius:6px;"></div>
<div class="a" style="left:879.2px;top:478.6px;width:80.5px;height:36.1px;background:#111115;border-radius:6px;"></div>
<div class="t" style="left:893.50px;top:498.09px;font-size:18.19px;color:#f0f0f0;transform:scaleX(0.9269);">Enable</div>
<div class="t" style="left:974.20px;top:498.09px;font-size:18.19px;color:#c9c9c9;transform:scaleX(0.9182);">Disable</div>
<div class="a" style="left:872px;top:551px;width:1131px;height:112px;box-sizing:border-box;border:1.5px solid #4593dc;border-radius:6px;background:#222327;overflow:hidden"><div style="position:absolute;left:9.8px;top:6.5px;font-family:'Liberation Mono', monospace;font-size:20.84px;line-height:29.6px;color:#d2d2d2;white-space:pre;-webkit-text-stroke:0.25px currentColor;">{&quot;@timestamp&quot;:&quot;2025-06-10T18:39:14.017Z&quot;,&quot;LogLevel&quot;:&quot;ERROR&quot;,&quot;message&quot;:&quot;Error
#1&quot;,&quot;logger&quot;:&quot;org.zylker.Main&quot;,&quot;thread&quot;:&quot;main&quot;,&quot;exception&quot;:&quot;java.lang.NullPointerExcepti
on: Generated NullPointerException\n\tat
org.example.Main.generateRandomError(Main.java:71)\n\tat</div></div>
<svg class="a" style="left:1986px;top:647px;" width="16" height="16" viewBox="0 0 16 16"><path d="M3.5 13.2 L13.8 2.8 M11 13.2 L13.8 10.3" stroke="#9a9a9a" stroke-width="1.5"/></svg>
<svg class="a" style="left:2043px;top:591px;" width="25" height="25" viewBox="0 0 25 25"><path d="M1.2 12.8 H23.7 M12.5 1.4 V24" stroke="#cfcfcf" stroke-width="3"/></svg>
<div class="t" style="left:872.50px;top:684.16px;font-size:20.87px;color:#3ec46d;transform:scaleX(0.9110);">Matched Pattern</div>
<div class="t" style="left:1015.50px;top:684.16px;font-size:20.87px;color:#e0e0e0;transform:scaleX(0.9344);">:</div>
<div class="t" style="left:1025.00px;top:684.16px;font-size:20.87px;color:#e6e6e6;font-weight:bold;transform:scaleX(0.8873);">default</div>
<div class="a" style="left:1848.2px;top:672.2px;width:152.8px;height:47.5px;background:#28292d;border:1px solid #4a4b50;box-sizing:border-box;border-radius:7px;"></div>
<svg class="a" style="left:1863px;top:685px;" width="24" height="20" viewBox="0 0 24 20"><g transform="scale(0.72)"><path d="M3 6 H10 Q11.6 6 10.8 7.4 L4.1 18.6 Q3 21.7 6 21.7 H13 Q14.6 21.7 15.6 19.6 L16.6 17.4 M16.6 8.5 L13.3 14.3 Q12.6 16.4 14.6 16.9 L25.4 20.9 Q28.8 21.8 28.1 18.7 L25.2 10.2 Q23.8 7 21.6 10.2 L16.5 17.4" fill="none" stroke="#d8d8d8" stroke-width="2.4" stroke-linejoin="round" stroke-linecap="round"/><circle cx="19.1" cy="4.7" r="1.9" fill="#d8d8d8"/></g></svg>
<div class="t" style="left:1894.60px;top:695.69px;font-size:23.69px;color:#ececec;transform:scaleX(0.9655);">Assistant</div>
<div class="a" style="left:872px;top:767.5px;width:1260px;height:136.3px;background:#222327;"></div>
<div class="a" style="left:872px;top:816px;width:1260px;height:1px;background:#313237;"></div>
<div class="t" style="left:941.50px;top:790.99px;font-size:21.94px;color:#d8d8d8;font-weight:bold;transform:scaleX(0.9321);">Name</div>
<div class="t" style="left:1101.60px;top:791.79px;font-size:21.94px;color:#d8d8d8;font-weight:bold;transform:scaleX(0.8903);">Pattern</div>
<svg class="a" style="left:1181px;top:777.5px;" width="25" height="25" viewBox="0 0 25 25"><circle cx="12.5" cy="12.5" r="12.3" fill="#8b8b8d"/><path d="M9.3 10 Q9.3 6.6 12.6 6.6 Q15.8 6.6 15.8 9.6 Q15.8 11.4 13.6 12.4 Q12.6 13 12.6 14.6" fill="none" stroke="#26272b" stroke-width="2.4"/><circle cx="12.6" cy="18" r="1.5" fill="#26272b"/></svg>
<svg class="a" style="left:886px;top:834px;" width="16" height="50" viewBox="0 0 16 50"><path d="M2.9 9.5 L8.3 4.1 L13.7 9.5 M2.9 40.4 L8.3 46.1 L13.7 40.4" fill="none" stroke="#bdbdbd" stroke-width="1.6"/></svg>
<div class="t" style="left:941.20px;top:858.29px;font-size:21.94px;color:#d8d8d8;font-weight:bold;transform:scaleX(0.9191);">default</div>
<div class="t" style="left:1101.20px;top:843.16px;font-size:20.87px;color:#d0d0d0;transform:scaleX(0.9142);">json $exception$ $app$ $hostname$ $@timestamp as timestamp:date:yyyy-MM-dd&#x27;T&#x27;HH:mm:ss.SS</div>
<div class="t" style="left:1101.20px;top:874.16px;font-size:20.87px;color:#d0d0d0;transform:scaleX(0.9159);">S&#x27;Z&#x27;$ $logger$ $thread$ $message$ $env$ $type$ $LogLevel$</div>
<svg class="a" style="left:1988px;top:846px;" width="28" height="28" viewBox="0 0 28 28"><g fill="#cacaca"><path d="M4.4 24.3 L6.6 17.8 L10.9 22.1 Z"/><path d="M7.9 16.5 L19.4 5 L23.6 9.2 L12.1 20.7 Z"/><path d="M20.7 3.7 L22.3 2.1 Q23.1 1.5 23.8 2.1 L25.9 4.2 Q26.5 4.9 25.9 5.7 L24.3 7.3 Z"/></g></svg>
<svg class="a" style="left:2027px;top:846px;" width="25" height="25" viewBox="0 0 25 25"><path d="M2.7 12.1 H22.2 M12.5 1.9 V22.1" stroke="#cdcdcd" stroke-width="3.1"/></svg>
<div class="t" style="left:880.50px;top:928.19px;font-size:21.94px;color:#d6d6d6;transform:scaleX(0.9552);">Sample Output</div>
<svg class="a" style="left:1024.7px;top:917.3px;" width="20" height="20" viewBox="0 0 20 20"><g transform="translate(10 10) scale(1.000)"><circle cx="0" cy="0" r="8.1" fill="none" stroke="#eeeeee" stroke-width="1.8"/><rect x="-1.05" y="-5.3" width="2.1" height="1.6" fill="#eeeeee"/><rect x="-1.05" y="-1.8" width="2.1" height="7.4" fill="#eeeeee"/></g></svg>
<div class="a" style="left:872px;top:969px;width:1260px;height:527px;background:#222327;"></div>
<div class="a" style="left:872px;top:1013.8px;width:1260px;height:1px;background:#313237;"></div>
<div class="a" style="left:872px;top:1128.8px;width:1260px;height:1px;background:#313237;"></div>
<div class="a" style="left:872px;top:1180.0px;width:1260px;height:1px;background:#313237;"></div>
<div class="a" style="left:872px;top:1230.1px;width:1260px;height:1px;background:#313237;"></div>
<div class="a" style="left:872px;top:1277.6px;width:1260px;height:1px;background:#313237;"></div>
<div class="a" style="left:872px;top:1328.7px;width:1260px;height:1px;background:#313237;"></div>
<div class="a" style="left:872px;top:1378.6px;width:1260px;height:1px;background:#313237;"></div>
<div class="a" style="left:872px;top:1429.8px;width:1260px;height:1px;background:#313237;"></div>
<div class="a" style="left:872px;top:1479.7px;width:1260px;height:1px;background:#313237;"></div>
<div class="t" style="left:949.00px;top:990.59px;font-size:21.94px;color:#d8d8d8;font-weight:bold;transform:scaleX(0.9047);">Field Name</div>
<div class="t" style="left:1188.70px;top:990.39px;font-size:21.94px;color:#d8d8d8;font-weight:bold;transform:scaleX(0.8911);">Value from Sample Log 1 - Matched pattern : default</div>
<div class="t" style="left:1907.50px;top:991.04px;font-size:19.8px;color:#5b9cf0;font-weight:bold;transform:scaleX(0.8985);">Edit Field Configurations</div>
<div class="t" style="left:949.00px;top:1070.89px;font-size:21.94px;color:#d2d2d2;transform:scaleX(0.9732);">exception</div>
<div class="t" style="left:949.00px;top:1152.99px;font-size:21.94px;color:#d2d2d2;transform:scaleX(0.9834);">app</div>
<div class="t" style="left:949.00px;top:1204.59px;font-size:21.94px;color:#d2d2d2;transform:scaleX(0.9600);">hostname</div>
<div class="t" style="left:949.00px;top:1254.09px;font-size:21.94px;color:#d2d2d2;transform:scaleX(0.9862);">timestamp</div>
<div class="t" style="left:949.00px;top:1303.39px;font-size:21.94px;color:#d2d2d2;transform:scaleX(0.9871);">logger</div>
<div class="t" style="left:949.00px;top:1353.29px;font-size:21.94px;color:#d2d2d2;transform:scaleX(0.9645);">thread</div>
<div class="t" style="left:949.00px;top:1403.79px;font-size:21.94px;color:#d2d2d2;transform:scaleX(0.9357);">message</div>
<div class="t" style="left:949.00px;top:1454.89px;font-size:21.94px;color:#d2d2d2;transform:scaleX(0.9442);">env</div>
<div class="t" style="left:1189.40px;top:1037.98px;font-size:20.0px;color:#d4d4d4;font-family:'Liberation Mono', monospace;">java.lang.NullPointerException: Generated NullPointerException at</div>
<div class="t" style="left:1189.40px;top:1071.98px;font-size:20.0px;color:#d4d4d4;font-family:'Liberation Mono', monospace;">org.example.Main.generateRandomError(Main.java:71) at</div>
<div class="t" style="left:1189.40px;top:1105.98px;font-size:20.0px;color:#d4d4d4;font-family:'Liberation Mono', monospace;">org.example.Main.main(Main.java:56)</div>
<div class="t" style="left:1189.40px;top:1155.28px;font-size:20.0px;color:#d4d4d4;font-family:'Liberation Mono', monospace;">test</div>
<div class="t" style="left:1189.40px;top:1206.88px;font-size:20.0px;color:#d4d4d4;font-family:'Liberation Mono', monospace;">zylker</div>
<div class="t" style="left:1189.40px;top:1256.38px;font-size:20.0px;color:#d4d4d4;font-family:'Liberation Mono', monospace;">2025-06-10T18:39:14.017Z</div>
<div class="t" style="left:1189.40px;top:1305.68px;font-size:20.0px;color:#d4d4d4;font-family:'Liberation Mono', monospace;">org.zylker.Main</div>
<div class="t" style="left:1189.40px;top:1355.58px;font-size:20.0px;color:#d4d4d4;font-family:'Liberation Mono', monospace;">main</div>
<div class="t" style="left:1189.40px;top:1406.08px;font-size:20.0px;color:#d4d4d4;font-family:'Liberation Mono', monospace;">Error #1</div>
<div class="t" style="left:1189.40px;top:1457.18px;font-size:20.0px;color:#d4d4d4;font-family:'Liberation Mono', monospace;">local</div>
<div class="a" style="left:2188px;top:0px;width:6px;height:1496px;background:rgba(0,0,0,0.35);"></div>
<div class="a" style="left:2194px;top:0px;width:4px;height:1496px;background:rgba(0,0,0,0.6);"></div>
<div class="a" style="left:2186px;top:94px;width:1.5px;height:32px;background:#3a3b3f;"></div></body></html>
